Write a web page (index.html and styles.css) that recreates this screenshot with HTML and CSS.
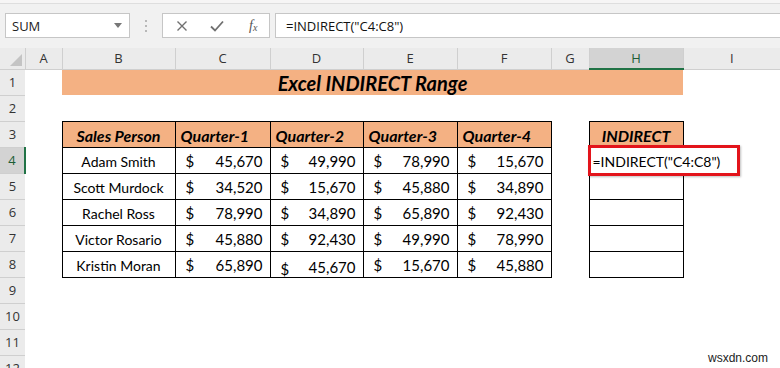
FILE: index.html
```html
<!DOCTYPE html>
<html>
<head>
<meta charset="utf-8">
<link rel="stylesheet" href="styles.css">
</head>
<body>
<div class="app">
  <div class="topstrip"></div>
  <div class="fbar">
    <div class="namebox"><span>SUM</span><svg class="arrow" width="8" height="5" viewBox="0 0 8 5"><path d="M0 0h8L4 5z" fill="#777"/></svg></div>
    <div class="dots"><i></i><i></i><i></i></div>
    <div class="btns">
      <svg width="12" height="12" viewBox="0 0 12 12"><path d="M1.5 1.5L10.5 10.5M10.5 1.5L1.5 10.5" stroke="#707070" stroke-width="1.4" fill="none"/></svg>
      <svg width="14" height="12" viewBox="0 0 14 12"><path d="M1 6.5L5 10.5L13 1.5" stroke="#707070" stroke-width="1.8" fill="none"/></svg>
      <span class="fx">f<sub>x</sub></span>
    </div>
    <div class="formula">=INDIRECT("C4:C8")</div>
  </div>
  <table class="sheet">
    <colgroup>
      <col class="c-rh"><col class="c-a"><col class="c-b"><col class="c-c"><col class="c-d"><col class="c-e"><col class="c-f"><col class="c-g"><col class="c-h"><col class="c-i">
    </colgroup>
    <tr class="hdr">
      <th class="corner"><span class="tri"></span></th>
      <th>A</th><th>B</th><th>C</th><th>D</th><th>E</th><th>F</th><th>G</th><th class="sel">H</th><th>I</th>
    </tr>
    <tr>
      <th class="rh">1</th><td></td>
      <td colspan="7" class="title">Excel INDIRECT Range</td>
      <td></td>
    </tr>
    <tr><th class="rh">2</th><td></td><td></td><td></td><td></td><td></td><td></td><td></td><td></td><td></td></tr>
    <tr>
      <th class="rh">3</th><td></td>
      <td class="b head">Sales Person</td>
      <td class="b head left">Quarter-1</td>
      <td class="b head left">Quarter-2</td>
      <td class="b head left">Quarter-3</td>
      <td class="b head left">Quarter-4</td>
      <td></td>
      <td class="b head">INDIRECT</td>
      <td></td>
    </tr>
    <tr>
      <th class="rh rsel">4</th><td></td>
      <td class="b name">Adam Smith</td>
      <td class="b"><div class="cur"><span>$</span><span>45,670</span></div></td>
      <td class="b"><div class="cur"><span>$</span><span>49,990</span></div></td>
      <td class="b"><div class="cur"><span>$</span><span>78,990</span></div></td>
      <td class="b"><div class="cur"><span>$</span><span>15,670</span></div></td>
      <td></td>
      <td class="b active"><span class="ftext">=INDIRECT("C4:C8")</span><span class="redbox"></span></td>
      <td></td>
    </tr>
    <tr>
      <th class="rh">5</th><td></td>
      <td class="b name">Scott Murdock</td>
      <td class="b"><div class="cur"><span>$</span><span>34,520</span></div></td>
      <td class="b"><div class="cur"><span>$</span><span>15,670</span></div></td>
      <td class="b"><div class="cur"><span>$</span><span>45,880</span></div></td>
      <td class="b"><div class="cur"><span>$</span><span>34,890</span></div></td>
      <td></td><td class="b"></td><td></td>
    </tr>
    <tr>
      <th class="rh">6</th><td></td>
      <td class="b name">Rachel Ross</td>
      <td class="b"><div class="cur"><span>$</span><span>78,990</span></div></td>
      <td class="b"><div class="cur"><span>$</span><span>34,890</span></div></td>
      <td class="b"><div class="cur"><span>$</span><span>65,890</span></div></td>
      <td class="b"><div class="cur"><span>$</span><span>92,430</span></div></td>
      <td></td><td class="b"></td><td></td>
    </tr>
    <tr>
      <th class="rh">7</th><td></td>
      <td class="b name">Victor Rosario</td>
      <td class="b"><div class="cur"><span>$</span><span>45,880</span></div></td>
      <td class="b"><div class="cur"><span>$</span><span>92,430</span></div></td>
      <td class="b"><div class="cur"><span>$</span><span>49,990</span></div></td>
      <td class="b"><div class="cur"><span>$</span><span>78,990</span></div></td>
      <td></td><td class="b"></td><td></td>
    </tr>
    <tr>
      <th class="rh">8</th><td></td>
      <td class="b name">Kristin Moran</td>
      <td class="b"><div class="cur"><span>$</span><span>65,890</span></div></td>
      <td class="b"><div class="cur low"><span class="lower">$</span><span>45,670</span></div></td>
      <td class="b"><div class="cur"><span>$</span><span>15,670</span></div></td>
      <td class="b"><div class="cur"><span>$</span><span>45,880</span></div></td>
      <td></td><td class="b"></td><td></td>
    </tr>
    <tr><th class="rh">9</th><td></td><td></td><td></td><td></td><td></td><td></td><td></td><td></td><td></td></tr>
    <tr><th class="rh">10</th><td></td><td></td><td></td><td></td><td></td><td></td><td></td><td></td><td></td></tr>
    <tr><th class="rh">11</th><td></td><td></td><td></td><td></td><td></td><td></td><td></td><td></td><td></td></tr>
    <tr><th class="rh">12</th><td></td><td></td><td></td><td></td><td></td><td></td><td></td><td></td><td></td></tr>
  </table>
  <div class="watermark">wsxdn.com</div>
</div>
</body>
</html>
```
FILE: styles.css
```css
* { box-sizing: border-box; }
html, body { margin: 0; padding: 0; background: #fff; }
.app {
  width: 780px;
  height: 368px;
  overflow: hidden;
  position: relative;
  font-family: "Open Sans", "Noto Sans", sans-serif;
}
.topstrip {
  height: 4px;
  background: #f6f5f5;
  border-bottom: 1px solid #dedede;
}
.fbar {
  height: 44px;
  background: #f1f1f1;
  display: flex;
  align-items: flex-start;
  padding: 9px 0 0 5px;
}
.namebox {
  width: 125px;
  height: 25px;
  background: #fff;
  border: 1px solid #c6c6c6;
  display: flex;
  align-items: center;
  justify-content: space-between;
  padding: 0 6px 0 6px;
  font-size: 13px;
  color: #222;
}
.namebox .arrow { margin-right: 1px; }
.dots {
  width: 32px;
  height: 25px;
  display: flex;
  flex-direction: column;
  align-items: center;
  justify-content: center;
  gap: 3px;
}
.dots i { display: block; width: 2px; height: 2px; background: #b8b8b8; }
.btns {
  width: 108px;
  height: 25px;
  background: #fff;
  border: 1px solid #c6c6c6;
  display: flex;
  align-items: center;
  padding-left: 13px;
  gap: 22px;
}
.fx {
  font-family: "Liberation Serif", serif;
  font-style: italic;
  font-size: 14px;
  color: #555;
  margin-left: 3px;
}
.fx sub { font-size: 10px; vertical-align: -1px; }
.formula {
  flex: 1;
  height: 25px;
  margin-left: 5px;
  background: #fff;
  border: 1px solid #c6c6c6;
  border-right: none;
  font-size: 13px;
  color: #111;
  display: flex;
  align-items: center;
  padding-left: 10px;
}
.sheet {
  border-collapse: collapse;
  table-layout: fixed;
  width: 780px;
  font-family: "Lato", "Liberation Sans", sans-serif;
  font-size: 15px;
  color: #000;
}
.c-rh { width: 25px; }
.c-a { width: 37px; }
.c-b { width: 113px; }
.c-c { width: 95px; }
.c-d { width: 93px; }
.c-e { width: 94px; }
.c-f { width: 94px; }
.c-g { width: 38px; }
.c-h { width: 94px; }
.c-i { width: 97px; }
.sheet tr { height: 26px; }
.sheet tr.hdr { height: 21px; }
.hdr th {
  background: #ebebeb;
  border-left: 1px solid #cfcfcf;
  border-bottom: 1px solid #cfcfcf;
  font-family: "Open Sans", sans-serif;
  font-weight: normal;
  font-size: 13px;
  color: #333;
  padding: 0;
}
.hdr th.sel {
  background: #d3d3d3;
  color: #1d5e36;
  border-bottom: 2px solid #217346;
}
.corner { position: relative; border-left: none !important; }
.tri {
  position: absolute;
  right: 3px;
  bottom: 3px;
  width: 0; height: 0;
  border-left: 12px solid transparent;
  border-bottom: 12px solid #c4c4c4;
}
.rh {
  background: #ebebeb;
  border-bottom: 1px solid #cfcfcf;
  font-family: "Open Sans", sans-serif;
  font-weight: normal;
  font-size: 13px;
  color: #333;
  padding: 0;
  text-align: center;
}
.rsel {
  background: #d3d3d3;
  color: #1d5e36;
  border-right: 2px solid #217346;
}
.sheet td { padding: 0; vertical-align: middle; white-space: nowrap; }
.title {
  background: #f4b183;
  text-align: center;
  font-weight: bold;
  font-style: italic;
  font-size: 20px;
  padding-top: 0;
}
.b { border: 1px solid #000; }
.head {
  background: #f4b183;
  font-weight: bold;
  font-style: italic;
  font-size: 16px;
  text-align: center;
  padding-top: 2px !important;
}
.head.left { text-align: left; padding-left: 5px !important; }
.name { text-align: center; font-size: 14px; padding-top: 3px !important; }
.cur {
  display: flex;
  justify-content: space-between;
  padding: 1px 7px 0 10px;
}
.cur.low { padding-top: 5px; }
.cur.low .lower { position: relative; top: 2px; }
.active {
  position: relative;
  overflow: visible;
  border-right: none;
}
.ftext {
  position: relative;
  left: 3px;
  top: 1px;
  font-size: 14px;
  z-index: 1;
}
.redbox {
  position: absolute;
  left: -2px;
  top: -3px;
  width: 152px;
  height: 31px;
  border: 3px solid #e3141b;
  box-shadow: 1px 1px 2px rgba(0,0,0,0.25);
  z-index: 2;
}
.watermark {
  position: absolute;
  right: 12px;
  bottom: 3px;
  font-family: "Liberation Sans", sans-serif;
  font-size: 12px;
  color: #222;
}
```
